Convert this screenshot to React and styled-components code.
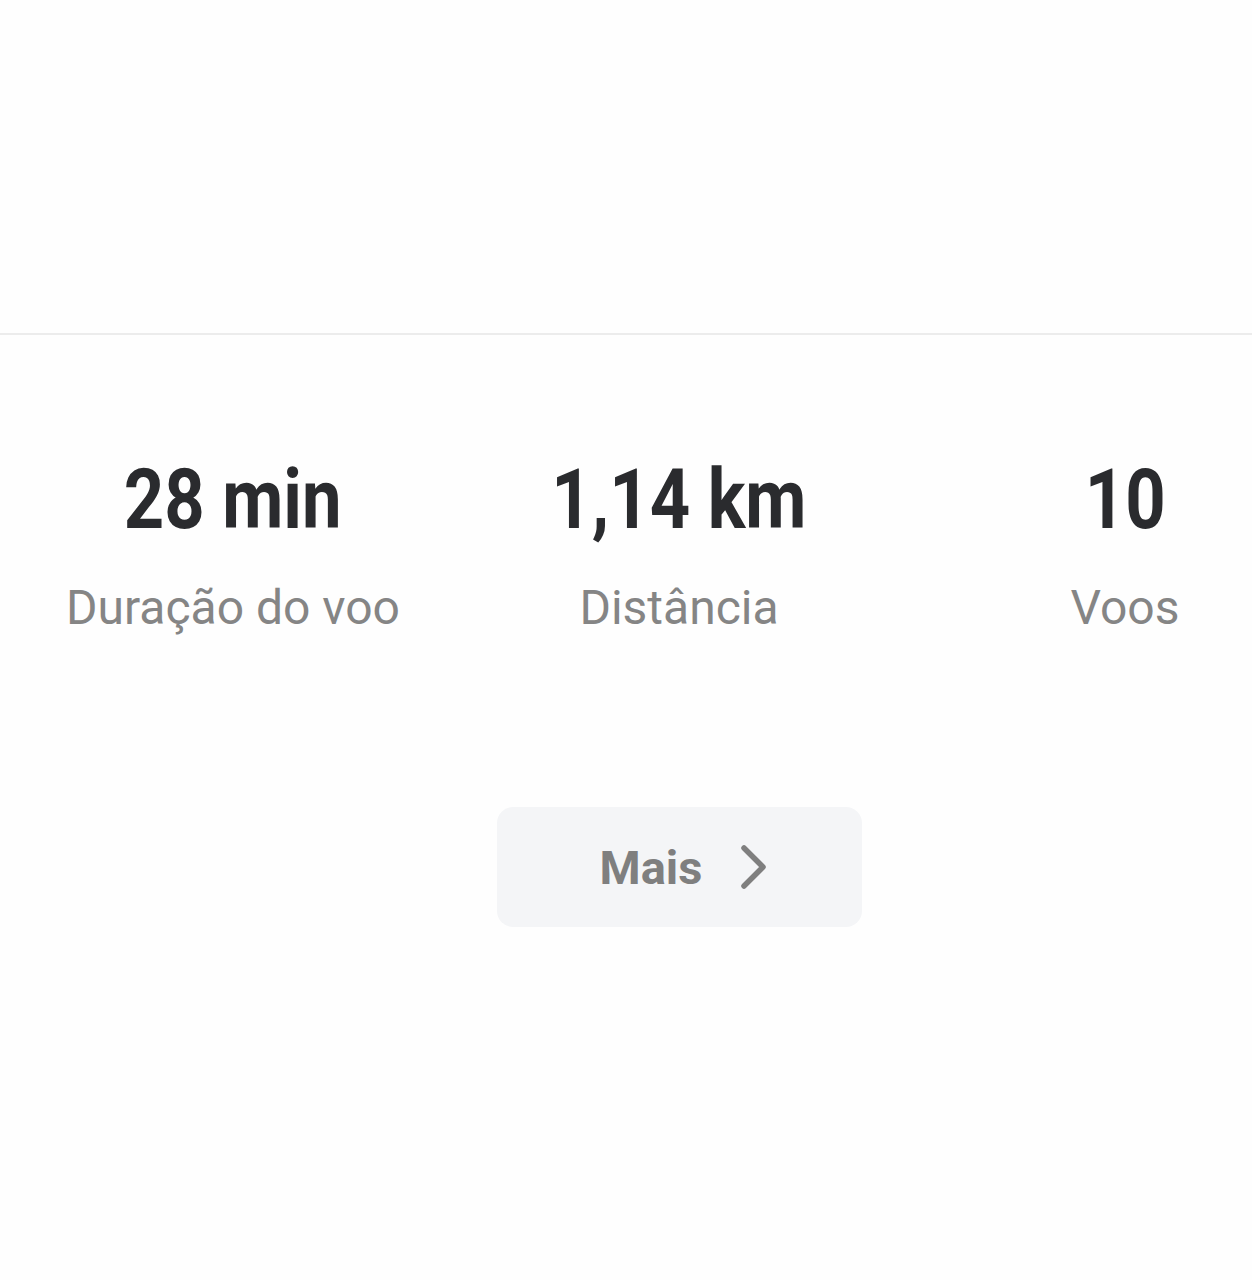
import React from "react";
import styled, { createGlobalStyle } from "styled-components";

const GlobalStyle = createGlobalStyle`
  html, body {
    margin: 0;
    padding: 0;
    background: #fefefe;
    font-family: Roboto, "Liberation Sans", sans-serif;
    overflow: hidden;
  }
`;

const Page = styled.div`
  width: 1252px;
  height: 1280px;
  overflow: hidden;
  background: #fefefe;
`;

const Header = styled.div`
  height: 333px;
  border-bottom: 2px solid #ececec;
`;

const Columns = styled.div`
  display: grid;
  grid-template-columns: repeat(3, 446px);
  padding-left: 10px;
  justify-items: center;
  padding-top: ${(p) => p.$top}px;
`;

const Stat = styled.div`
  display: flex;
  flex-direction: column;
  align-items: center;
  gap: 42px;
`;

const Value = styled.div`
  font-size: 84px;
  line-height: 1;
  font-weight: 700;
  color: #2a2b2e;
  white-space: nowrap;
  transform: scaleX(0.84);
`;

const Label = styled.div`
  font-size: 48px;
  line-height: 1;
  color: #858585;
  white-space: nowrap;
`;

const MoreButton = styled.button`
  grid-column: 2;
  width: 365px;
  height: 120px;
  border: none;
  border-radius: 16px;
  background: #f4f5f7;
  display: flex;
  align-items: center;
  justify-content: center;
  gap: 38px;
  font-family: Roboto, "Liberation Sans", sans-serif;
  font-size: 47px;
  font-weight: 700;
  color: #7f7f7f;
  padding: 0 0 0 10px;
`;

const stats = [
  { value: "28 min", label: "Duração do voo" },
  { value: "1,14 km", label: "Distância" },
  { value: "10", label: "Voos" },
];

export default function App() {
  return (
    <Page>
      <GlobalStyle />
      <Header />
      <Columns $top={123}>
        {stats.map((s) => (
          <Stat key={s.label}>
            <Value>{s.value}</Value>
            <Label>{s.label}</Label>
          </Stat>
        ))}
      </Columns>
      <Columns $top={175}>
        <MoreButton>
          Mais
          <svg width="28" height="44" viewBox="0 0 28 44" fill="none">
            <path
              d="M4 3 L23 22 L4 41"
              stroke="#7f7f7f"
              strokeWidth="5.5"
              strokeLinecap="round"
              strokeLinejoin="round"
            />
          </svg>
        </MoreButton>
      </Columns>
    </Page>
  );
}
